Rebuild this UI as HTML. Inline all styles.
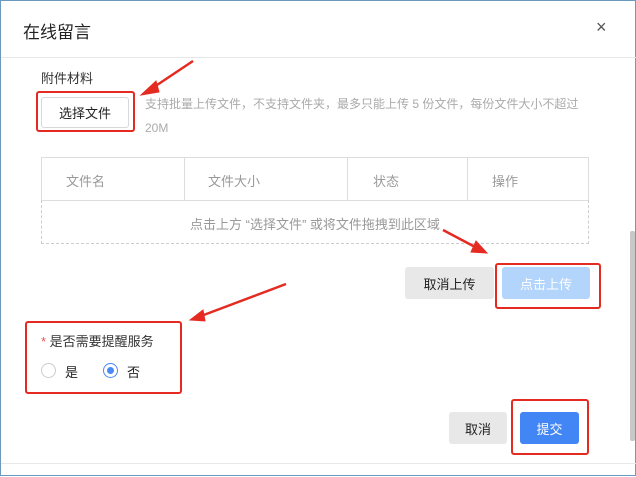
<!DOCTYPE html>
<html><head><meta charset="utf-8"><style>
*{margin:0;padding:0;box-sizing:border-box}
body{width:636px;height:476px;background:#fff;font-family:"Liberation Sans","Noto Sans CJK SC",sans-serif;position:relative;overflow:hidden;border:1px solid #6a9ac0}
.a{position:absolute}
.red{position:absolute;border:2px solid #e52a22;border-radius:3px}
.btn{position:absolute;display:flex;align-items:center;justify-content:center;font-size:13px;border-radius:3px}
</style></head><body>
<div class="a" style="left:22px;top:17px;font-size:17px;color:#222">在线留言</div>
<div class="a" style="left:595px;top:16px;font-size:18px;color:#555">×</div>
<div class="a" style="left:0;top:56px;width:636px;height:1px;background:#e8e8e8"></div>
<div class="a" style="left:40px;top:67px;font-size:13px;color:#333">附件材料</div>
<div class="btn" style="left:40px;top:96px;width:88px;height:31px;border:1px solid #d8d8d8;color:#222">选择文件</div>
<div class="red" style="left:35px;top:90px;width:99px;height:41px"></div>
<div class="a" style="left:144px;top:91px;font-size:12px;color:#aaa;line-height:24px;width:440px">支持批量上传文件，不支持文件夹，最多只能上传 5 份文件，每份文件大小不超过 20M</div>
<div class="a" style="left:40px;top:156px;width:548px;height:87px;border:1px solid #ddd;border-top-color:#ddd"></div>
<div class="a" style="left:40px;top:199px;width:548px;height:44px;border:1px dashed #ccc;border-top:1px solid #ddd;background:#fff"></div>
<div class="a" style="left:183px;top:156px;width:1px;height:43px;background:#ddd"></div>
<div class="a" style="left:346px;top:156px;width:1px;height:43px;background:#ddd"></div>
<div class="a" style="left:466px;top:156px;width:1px;height:43px;background:#ddd"></div>
<div class="a" style="left:65px;top:170px;font-size:13px;color:#999">文件名</div>
<div class="a" style="left:207px;top:170px;font-size:13px;color:#999">文件大小</div>
<div class="a" style="left:372px;top:170px;font-size:13px;color:#999">状态</div>
<div class="a" style="left:491px;top:170px;font-size:13px;color:#999">操作</div>
<div class="a" style="left:40px;top:213px;width:548px;text-align:center;font-size:13px;color:#999">点击上方 “选择文件” 或将文件拖拽到此区域</div>
<div class="btn" style="left:404px;top:266px;width:89px;height:32px;background:#e8e8e8;color:#222">取消上传</div>
<div class="btn" style="left:501px;top:266px;width:88px;height:32px;background:#b3d4fb;color:#fff">点击上传</div>
<div class="red" style="left:494px;top:262px;width:106px;height:46px"></div>
<div class="red" style="left:24px;top:320px;width:157px;height:73px"></div>
<div class="a" style="left:40px;top:330px;font-size:13px;color:#333"><span style="color:#e55">*</span> 是否需要提醒服务</div>
<div class="a" style="left:40px;top:362px;width:15px;height:15px;border:1px solid #ccc;border-radius:50%"></div>
<div class="a" style="left:64px;top:361px;font-size:13px;color:#222">是</div>
<div class="a" style="left:102px;top:362px;width:15px;height:15px;border:1px solid #4a8af4;border-radius:50%"></div>
<div class="a" style="left:106px;top:366px;width:7px;height:7px;background:#4a8af4;border-radius:50%"></div>
<div class="a" style="left:126px;top:361px;font-size:13px;color:#222">否</div>
<div class="btn" style="left:448px;top:411px;width:58px;height:32px;background:#e8e8e8;color:#222">取消</div>
<div class="btn" style="left:519px;top:411px;width:59px;height:32px;background:#4285f4;color:#fff">提交</div>
<div class="red" style="left:510px;top:398px;width:78px;height:56px"></div>
<div class="a" style="left:0;top:462px;width:636px;height:1px;background:#e8e8e8"></div>
<div class="a" style="left:629px;top:230px;width:5px;height:210px;background:#c8c8c8;border-radius:2px"></div>
<svg class="a" style="left:0;top:0" width="636" height="476">
<g stroke="#e52a22" fill="#e52a22" stroke-width="2.5">
<line x1="192" y1="60" x2="150" y2="88"/><polygon points="140,94 155,80 158,91" stroke-width="1"/>
<line x1="442" y1="229" x2="476" y2="247"/><polygon points="486,252 470,251 475,240" stroke-width="1"/>
<line x1="285" y1="283" x2="200" y2="315"/><polygon points="189,319 202,309 204,320" stroke-width="1"/>
</g></svg>
</body></html>
